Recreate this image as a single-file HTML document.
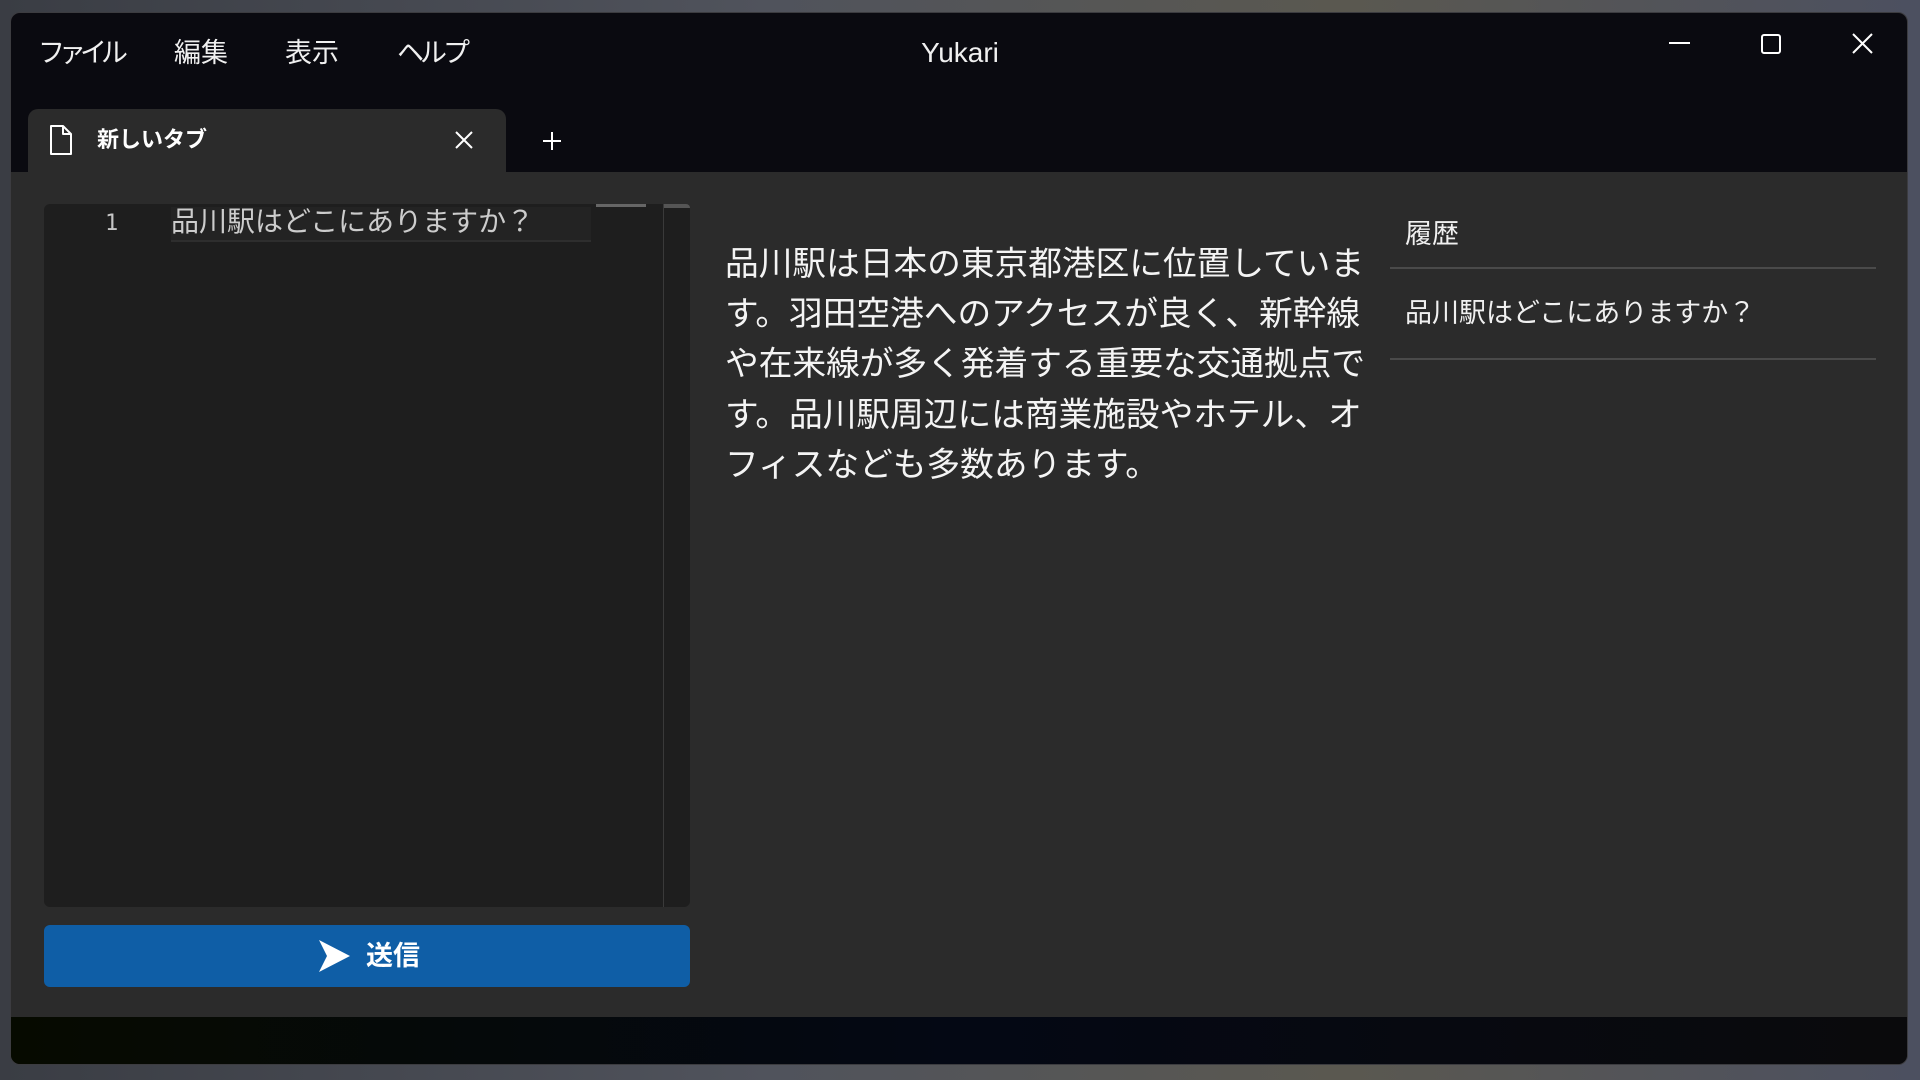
<!DOCTYPE html>
<html><head><meta charset="utf-8"><style>
*{margin:0;padding:0;box-sizing:border-box}
body{width:1920px;height:1080px;overflow:hidden;background:linear-gradient(90deg,#3a3d44,#50535c 40%,#5a5850 70%,#4c5060);font-family:"Liberation Sans","Noto Sans CJK JP",sans-serif;color:#fff;position:relative}
.win{position:absolute;left:10px;top:12px;width:1898px;height:1053px;background:#0a0a10;border-radius:10px;overflow:hidden;border:1px solid #3c3c40}
.abs{position:absolute;white-space:nowrap}
.menu{top:20px;font-size:27px;color:#f0f0f0;line-height:40px}
.content{left:0;top:159px;width:1898px;height:845px;background:#2b2b2b}
.bottom{left:0;top:1004px;width:1898px;height:49px;background:linear-gradient(90deg,#060a00,#040814 50%,#0a0a0c)}
</style></head><body>
<div class="win">
 <div class="abs menu" style="left:27px;letter-spacing:-6px">ファイル</div>
 <div class="abs menu" style="left:163px">編集</div>
 <div class="abs menu" style="left:274px">表示</div>
 <div class="abs menu" style="left:386px;letter-spacing:-4px">ヘルプ</div>
 <div class="abs" style="left:0;width:1898px;top:20px;line-height:40px;text-align:center;font-size:28px;color:#f0f0f0">Yukari</div>
 <svg class="abs" style="left:1640px;top:15px" width="240" height="40" viewBox="0 0 240 40">
  <line x1="18" y1="15" x2="39" y2="15" stroke="#fff" stroke-width="2"/>
  <rect x="111" y="7" width="18" height="18" rx="2" fill="none" stroke="#fff" stroke-width="2"/>
  <path d="M202 6 L221 25 M221 6 L202 25" stroke="#fff" stroke-width="2"/>
 </svg>
 <div class="abs" style="left:17px;top:96px;width:478px;height:64px;background:#2b2b2b;border-radius:10px 10px 0 0"></div>
 <svg class="abs" style="left:38px;top:111px" width="24" height="32" viewBox="0 0 24 32"><path d="M2 2 H14 L22 10 V30 H2 Z M14 2 V10 H22" fill="none" stroke="#fff" stroke-width="2" stroke-linejoin="round"/></svg>
 <div class="abs" style="left:86px;top:112px;font-size:22px;font-weight:bold;line-height:30px">新しいタブ</div>
 <svg class="abs" style="left:444px;top:118px" width="18" height="18"><path d="M1 1L17 17M17 1L1 17" stroke="#fff" stroke-width="2"/></svg>
 <svg class="abs" style="left:531px;top:118px" width="20" height="20"><path d="M10 1V19M1 10H19" stroke="#fff" stroke-width="2"/></svg>
 <div class="abs content">
  <div class="abs" style="left:33px;top:32px;width:646px;height:703px;background:#1e1e1e;border-radius:6px">
   <div class="abs" style="left:619px;top:0;width:1px;height:703px;background:#3a3a3a"></div>
   <div class="abs" style="left:620px;top:0;width:26px;height:4px;background:#555;border-radius:0 6px 0 0"></div>
   <div class="abs" style="left:552px;top:0;width:50px;height:3px;background:#666"></div>
   <div class="abs" style="left:127px;top:3px;width:420px;height:35px;background:#232323;border-bottom:2px solid #2e2e2e"></div>
   <div class="abs" style="left:61px;top:3px;font-family:'DejaVu Sans Mono',monospace;font-size:22px;line-height:34px;color:#c6c6c6">1</div>
   <div class="abs" style="left:127px;top:-1px;font-size:28px;line-height:38px;color:#cccccc">品川駅はどこにありますか？</div>
  </div>
  <div class="abs" style="left:33px;top:753px;width:646px;height:62px;background:#0f5ea6;border-radius:6px">
   <svg class="abs" style="left:273px;top:14px" width="34" height="34" viewBox="0 0 34 34"><path d="M2 1 L33 17 L2 33 L10 17 Z" fill="#fff"/></svg>
   <div class="abs" style="left:322px;top:11px;font-size:27px;font-weight:bold;line-height:40px">送信</div>
  </div>
  <div class="abs" style="left:714px;top:67px;font-size:33.7px;line-height:50.2px;color:#f4f4f4">品川駅は日本の東京都港区に位置していま<br>す。羽田空港へのアクセスが良く、新幹線<br>や在来線が多く発着する重要な交通拠点で<br>す。品川駅周辺には商業施設やホテル、オ<br>フィスなども多数あります。</div>
  <div class="abs" style="left:1394px;top:44px;font-size:27px;line-height:36px;color:#f0f0f0">履歴</div>
  <div class="abs" style="left:1379px;top:95px;width:486px;height:2px;background:#4a4a4a"></div>
  <div class="abs" style="left:1394px;top:122px;font-size:27px;line-height:38px;color:#f0f0f0">品川駅はどこにありますか？</div>
  <div class="abs" style="left:1379px;top:186px;width:486px;height:2px;background:#4a4a4a"></div>
 </div>
 <div class="abs bottom"></div>
</div>
</body></html>
